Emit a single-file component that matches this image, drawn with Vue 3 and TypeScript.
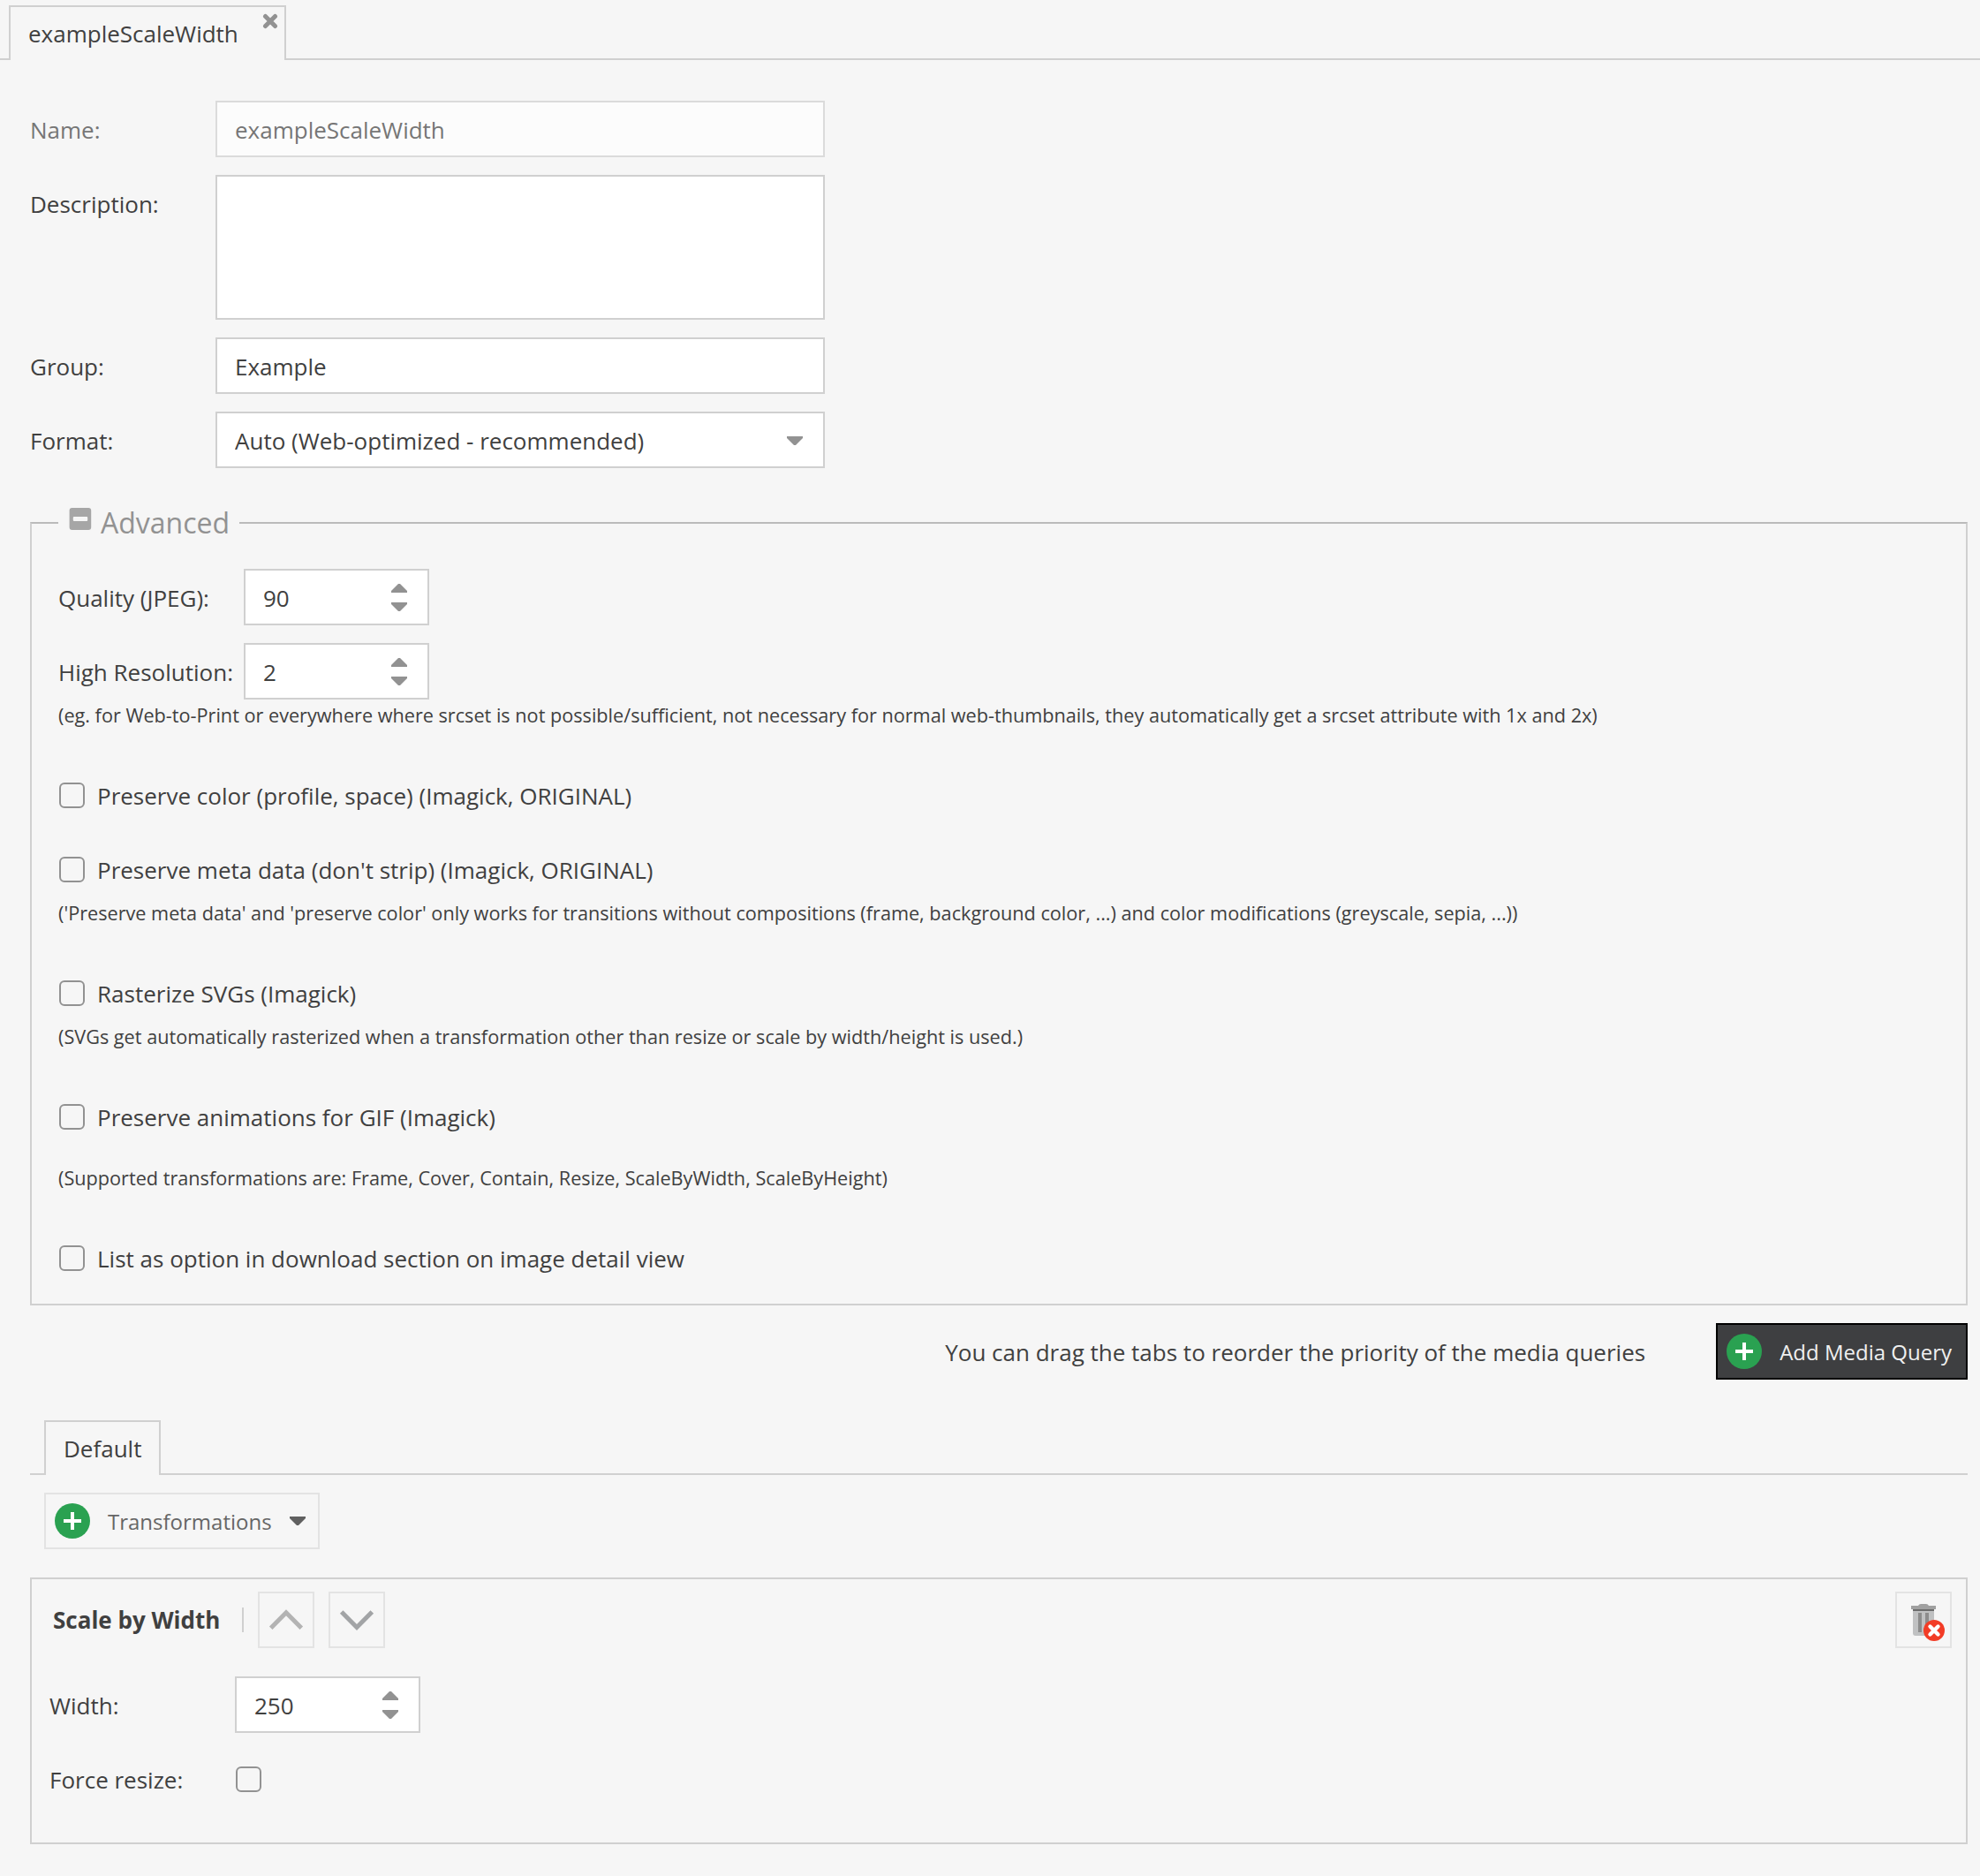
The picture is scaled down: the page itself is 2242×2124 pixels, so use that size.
<script setup lang="ts">
import { ref } from 'vue'

interface CheckOption {
  id: string
  label: string
  hint?: string
  spacedHint?: boolean
}

const name = ref('exampleScaleWidth')
const description = ref('')
const group = ref('Example')
const format = ref('auto')
const expanded = ref(true)

const numbers = ref([
  { id: 'quality', label: 'Quality (JPEG):', value: 90, hint: '' },
  {
    id: 'resolution',
    label: 'High Resolution:',
    value: 2,
    hint: '(eg. for Web-to-Print or everywhere where srcset is not possible/sufficient, not necessary for normal web-thumbnails, they automatically get a srcset attribute with 1x and 2x)',
  },
])

const options: CheckOption[] = [
  { id: 'color', label: 'Preserve color (profile, space) (Imagick, ORIGINAL)' },
  {
    id: 'meta',
    label: "Preserve meta data (don't strip) (Imagick, ORIGINAL)",
    hint: "('Preserve meta data' and 'preserve color' only works for transitions without compositions (frame, background color, ...) and color modifications (greyscale, sepia, ...))",
  },
  {
    id: 'svg',
    label: 'Rasterize SVGs (Imagick)',
    hint: '(SVGs get automatically rasterized when a transformation other than resize or scale by width/height is used.)',
  },
  {
    id: 'gif',
    label: 'Preserve animations for GIF (Imagick)',
    hint: '(Supported transformations are: Frame, Cover, Contain, Resize, ScaleByWidth, ScaleByHeight)',
    spacedHint: true,
  },
  { id: 'download', label: 'List as option in download section on image detail view' },
]
const checked = ref<string[]>([])

const width = ref(250)
const forceResize = ref(false)
</script>

<template>
  <div class="page">
    <div class="tabbar tabbar-main" role="tablist">
      <div class="tab tab-closable" role="tab" aria-selected="true">
        exampleScaleWidth
        <button class="close" type="button" aria-label="Close tab">
          <svg width="18" height="18" viewBox="0 0 18 18"><path d="M3.5 3.5 14.5 14.5M14.5 3.5 3.5 14.5" stroke="#929292" stroke-width="5" stroke-linecap="round" /></svg>
        </button>
      </div>
    </div>

    <main class="content">
      <div class="stack">
        <div class="row disabled">
          <label class="label" for="name">Name:</label>
          <input id="name" v-model="name" class="field" type="text" disabled />
        </div>
        <div class="row">
          <label class="label" for="description">Description:</label>
          <textarea id="description" v-model="description" class="field area"></textarea>
        </div>
        <div class="row">
          <label class="label" for="group">Group:</label>
          <input id="group" v-model="group" class="field" type="text" />
        </div>
        <div class="row">
          <label class="label" for="format">Format:</label>
          <div class="select">
            <select id="format" v-model="format" class="field">
              <option value="auto">Auto (Web-optimized - recommended)</option>
            </select>
            <svg class="select-arrow" width="20" height="12" viewBox="0 0 20 12"><path d="M1 1h18v2l-8 8h-2l-8-8z" fill="#929292" /></svg>
          </div>
        </div>
      </div>

      <fieldset class="advanced">
        <legend>
          <span class="legend">
            <button class="toggle" type="button" aria-label="Toggle advanced settings" @click="expanded = !expanded">
              <svg width="26" height="26" viewBox="0 0 26 26"><rect x="0.6" width="24.6" height="25" rx="3" fill="#a6a6a6" /><rect x="4.8" y="10" width="16.4" height="5" rx="1" fill="#f6f6f6" /></svg>
            </button>
            Advanced
          </span>
        </legend>
        <div v-show="expanded" class="stack">
          <div v-for="item in numbers" :key="item.id">
            <div class="row">
              <label class="label" :for="item.id">{{ item.label }}</label>
              <div class="spinner">
                <input :id="item.id" v-model.number="item.value" type="number" />
                <div class="steps">
                  <button type="button" aria-label="Increase" @click="item.value++"><svg width="18" height="10" viewBox="0 0 18 10"><path d="M8 0h2l8 8v2H0V8z" fill="#929292" /></svg></button>
                  <button type="button" aria-label="Decrease" @click="item.value--"><svg width="18" height="10" viewBox="0 0 18 10"><path d="M0 0h18v2l-8 8H8L0 2z" fill="#929292" /></svg></button>
                </div>
              </div>
            </div>
            <p v-if="item.hint" class="hint"><small>{{ item.hint }}</small></p>
          </div>
          <div v-for="option in options" :key="option.id" :class="{ stack: option.spacedHint }">
            <label class="check">
              <input v-model="checked" type="checkbox" :value="option.id" />
              <span class="text">{{ option.label }}</span>
            </label>
            <p v-if="option.hint" class="hint"><small>{{ option.hint }}</small></p>
          </div>
        </div>
      </fieldset>

      <div class="media">
        <span class="text">You can drag the tabs to reorder the priority of the media queries</span>
        <button class="button button-dark" type="button">
          <svg width="40" height="40" viewBox="0 0 40 40"><circle cx="20" cy="20" r="20" fill="#2aa151" /><path d="M20 10v20M10 20h20" stroke="#fff" stroke-width="4" /></svg>
          Add Media Query
        </button>
      </div>

      <div class="tabbar tabbar-inner" role="tablist">
        <div class="tab" role="tab" aria-selected="true">Default</div>
      </div>

      <div class="toolbar">
        <button class="button button-light" type="button">
          <svg width="40" height="40" viewBox="0 0 40 40"><circle cx="20" cy="20" r="20" fill="#2aa151" /><path d="M20 10v20M10 20h20" stroke="#fff" stroke-width="4" /></svg>
          Transformations
          <svg width="18" height="10" viewBox="0 0 18 10"><path d="M0 0h18v2l-8 8H8L0 2z" fill="#606060" /></svg>
        </button>
      </div>

      <section class="panel">
        <header class="panel-head">
          <strong>Scale by Width</strong>
          <span class="separator"></span>
          <button class="icon-button" type="button" aria-label="Move up">
            <svg width="60" height="60" viewBox="2 2 60 60"><path d="M14.7 41.2 32 23.8 49.3 41.2" fill="none" stroke="#b3b3b3" stroke-width="5" /></svg>
          </button>
          <button class="icon-button" type="button" aria-label="Move down">
            <svg width="60" height="60" viewBox="2 2 60 60"><path d="M14.7 23 32 40.5 49.3 23" fill="none" stroke="#a2a4a6" stroke-width="5" /></svg>
          </button>
          <button class="icon-button remove" type="button" aria-label="Delete">
            <svg width="60" height="60" viewBox="2 2 60 60">
              <path d="M20 20h24v27a3 3 0 0 1-3 3H23a3 3 0 0 1-3-3z" fill="#c0c1c2" />
              <path d="M26 24h4v22h-4zM34 24h4v22h-4z" fill="#8c8c8c" />
              <path d="M20 20h24v2H20z" fill="#6c6c6c" />
              <path d="M18 16h8q1-2 3-2h6q2 0 3 2h8v4H18z" fill="#a0a0a0" />
              <circle cx="44" cy="44" r="12" fill="#f23c26" />
              <path d="m39.5 39.5 9 9m0-9-9 9" stroke="#fff" stroke-width="4.4" stroke-linecap="round" />
            </svg>
          </button>
        </header>
        <div class="stack">
          <div class="row">
            <label class="label" for="width">Width:</label>
            <div class="spinner">
              <input id="width" v-model.number="width" type="number" />
              <div class="steps">
                <button type="button" aria-label="Increase" @click="width++"><svg width="18" height="10" viewBox="0 0 18 10"><path d="M8 0h2l8 8v2H0V8z" fill="#929292" /></svg></button>
                <button type="button" aria-label="Decrease" @click="width--"><svg width="18" height="10" viewBox="0 0 18 10"><path d="M0 0h18v2l-8 8H8L0 2z" fill="#929292" /></svg></button>
              </div>
            </div>
          </div>
          <div class="row row-center">
            <label class="label" for="force">Force resize:</label>
            <input id="force" v-model="forceResize" type="checkbox" />
          </div>
        </div>
      </section>
    </main>
  </div>
</template>

<style>
body {
  margin: 0;
  background: #f6f6f6;
}
</style>

<style scoped>
.page {
  padding-bottom: 36px;
  color: #404040;
  font-family: 'Open Sans', 'Noto Sans', sans-serif;
  font-size: 26px;
}
.page * {
  box-sizing: border-box;
}
button,
input,
select,
textarea {
  margin: 0;
  padding: 0;
  border: 0;
  border-radius: 0;
  outline: 0;
  background: none;
  color: inherit;
  font: inherit;
}
svg {
  display: block;
  flex: none;
}
.tabbar {
  display: flex;
  border-bottom: 2px solid #d0d0d0;
}
.tabbar-main {
  padding: 6px 10px 0;
}
.tabbar-inner {
  margin-top: 46px;
  padding: 0 16px;
}
.tab {
  position: relative;
  height: 62px;
  margin-bottom: -2px;
  padding: 0 20px;
  border: 2px solid #d0d0d0;
  border-bottom: 0;
  background: #f6f6f6;
  line-height: 60px;
}
.tab-closable {
  padding-right: 52px;
}
.close {
  position: absolute;
  top: 7px;
  right: 7px;
}
.content {
  padding: 46px 14px 0 34px;
}
.stack {
  display: flex;
  flex-direction: column;
  gap: 20px;
}
.row {
  display: flex;
  align-items: flex-start;
}
.row-center {
  align-items: center;
}
.label {
  width: 210px;
  height: 64px;
  flex: none;
  line-height: 66px;
}
.text {
  padding-top: 2px;
}
.field {
  display: block;
  width: 690px;
  height: 64px;
  padding: 2px 20px 0;
  border: 2px solid #d0d0d0;
  background: #fff;
}
.area {
  height: 164px;
  resize: none;
}
.disabled {
  opacity: 0.7;
}
.select {
  position: relative;
}
.select .field {
  appearance: none;
}
.select-arrow {
  position: absolute;
  top: 27px;
  right: 24px;
  pointer-events: none;
}
.advanced {
  min-width: 0;
  margin: 40px 0 0;
  padding: 30px 30px 20px;
  border: 2px solid #d0d0d0;
  border-top-color: #bbb;
}
legend {
  padding: 0 11px 0 12px;
  color: #929292;
  font-size: 32px;
  line-height: 44px;
}
.legend {
  display: flex;
  align-items: flex-start;
  gap: 10px;
}
.toggle {
  margin-top: 5px;
}
.spinner {
  display: flex;
  width: 210px;
  height: 64px;
  border: 2px solid #d0d0d0;
  background: #fff;
}
.spinner input {
  min-width: 0;
  flex: 1;
  padding: 2px 0 0 20px;
  appearance: textfield;
}
.spinner input::-webkit-inner-spin-button {
  appearance: none;
}
.steps {
  display: flex;
  width: 64px;
  flex-direction: column;
  align-items: center;
  justify-content: center;
  gap: 11px;
}
.hint {
  margin: 0;
  padding-bottom: 20px;
  line-height: 36px;
}
.hint small {
  display: block;
}
.check {
  display: flex;
  height: 64px;
  align-items: center;
  gap: 14px;
}
input[type='checkbox'] {
  width: 29px;
  height: 29px;
  flex: none;
  margin-left: 1px;
  border: 2px solid #929292;
  border-radius: 6px;
  appearance: none;
}
input[type='checkbox']:checked {
  background: #929292;
}
.media {
  display: flex;
  margin-top: 20px;
  align-items: center;
  justify-content: flex-end;
  gap: 80px;
}
.button {
  display: flex;
  height: 64px;
  padding: 0 16px 0 10px;
  align-items: center;
  gap: 20px;
  font-size: 24px;
}
.button-dark {
  border: 2px solid #000;
  background: #3e3f41;
  color: #f0f0f0;
}
.button-light {
  padding-right: 14px;
  border: 2px solid #e3e3e3;
  color: #666;
}
.toolbar {
  display: flex;
  padding: 20px 16px 32px;
}
.panel {
  padding: 14px 16px 40px 20px;
  border: 2px solid #d0d0d0;
}
.panel-head {
  display: flex;
  margin-bottom: 32px;
  padding-left: 4px;
  align-items: center;
  gap: 16px;
}
.separator {
  width: 2px;
  height: 28px;
  margin-left: 9px;
  background: #d0d0d0;
}
.icon-button {
  border: 2px solid #e3e3e3;
}
.remove {
  margin-left: auto;
}
</style>
